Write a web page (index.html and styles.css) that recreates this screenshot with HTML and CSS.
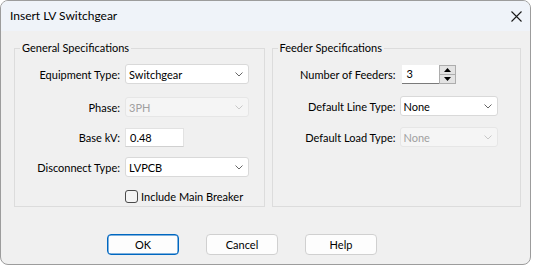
FILE: index.html
```html
<!DOCTYPE html>
<html>
<head>
<meta charset="utf-8">
<link rel="stylesheet" href="styles.css">
</head>
<body>
<div class="win">
  <div class="titlebar">
    <span class="title">Insert LV Switchgear</span>
    <svg class="close" width="11" height="11" viewBox="0 0 11 11"><path d="M0.5 0.5 L10.5 10.5 M10.5 0.5 L0.5 10.5" stroke="#1a1a1a" stroke-width="1.1" fill="none"/></svg>
  </div>
  <div class="content">
    <div class="groups">
      <fieldset class="group group-left">
        <legend>General Specifications</legend>
        <div class="row r1">
          <span class="lbl">Equipment Type:</span>
          <div class="combo"><span>Switchgear</span><svg class="chev" width="8" height="5" viewBox="0 0 8 5"><path d="M0.5 0.5 L4 4 L7.5 0.5" stroke="#666" fill="none"/></svg></div>
        </div>
        <div class="row r2">
          <span class="lbl">Phase:</span>
          <div class="combo disabled"><span>3PH</span><svg class="chev" width="8" height="5" viewBox="0 0 8 5"><path d="M0.5 0.5 L4 4 L7.5 0.5" stroke="#c8c8c8" fill="none"/></svg></div>
        </div>
        <div class="row r3">
          <span class="lbl">Base kV:</span>
          <div class="edit short">0.48</div>
        </div>
        <div class="row r4">
          <span class="lbl">Disconnect Type:</span>
          <div class="combo"><span>LVPCB</span><svg class="chev" width="8" height="5" viewBox="0 0 8 5"><path d="M0.5 0.5 L4 4 L7.5 0.5" stroke="#666" fill="none"/></svg></div>
        </div>
        <div class="row r5">
          <span class="lbl"></span>
          <label class="check"><span class="box"></span>Include Main Breaker</label>
        </div>
      </fieldset>
      <fieldset class="group group-right">
        <legend>Feeder Specifications</legend>
        <div class="row r1">
          <span class="lbl">Number of Feeders:</span>
          <div class="spin">
            <div class="spin-edit">3</div>
            <div class="spin-btns">
              <div class="sb"><svg width="7" height="4" viewBox="0 0 7 4"><path d="M0 4 L3.5 0 L7 4 Z" fill="#000"/></svg></div>
              <div class="sb"><svg width="7" height="4" viewBox="0 0 7 4"><path d="M0 0 L3.5 4 L7 0 Z" fill="#000"/></svg></div>
            </div>
          </div>
        </div>
        <div class="row r2b">
          <span class="lbl">Default Line Type:</span>
          <div class="combo"><span>None</span><svg class="chev" width="8" height="5" viewBox="0 0 8 5"><path d="M0.5 0.5 L4 4 L7.5 0.5" stroke="#666" fill="none"/></svg></div>
        </div>
        <div class="row r3b">
          <span class="lbl">Default Load Type:</span>
          <div class="combo disabled"><span>None</span><svg class="chev" width="8" height="5" viewBox="0 0 8 5"><path d="M0.5 0.5 L4 4 L7.5 0.5" stroke="#c8c8c8" fill="none"/></svg></div>
        </div>
      </fieldset>
    </div>
    <div class="buttons">
      <button class="btn default">OK</button>
      <button class="btn">Cancel</button>
      <button class="btn">Help</button>
    </div>
  </div>
</div>
</body>
</html>
```
FILE: styles.css
```css
* { box-sizing: border-box; }
html, body { margin: 0; padding: 0; background: #ffffff; }
body {
  font-family: "Lato", "Noto Sans", sans-serif;
  font-size: 11px;
  color: #000;
}
.win {
  width: 531px;
  height: 265px;
  border: 1px solid #9c9c9c;
  border-radius: 8px;
  overflow: hidden;
  background: #f0f0f0;
  display: flex;
  flex-direction: column;
}
.titlebar {
  height: 30px;
  flex: none;
  background: #eff3f9;
  display: flex;
  align-items: center;
  padding-left: 9px;
  padding-right: 8px;
}
.title { flex: 1; font-size: 12px; line-height: 16px; }
.content {
  flex: 1;
  padding: 9px 9px 0 13px;
}
.groups {
  display: flex;
  gap: 7px;
}
.group {
  margin: 0;
  padding: 0;
  border: 1px solid #dcdcdc;
  height: 167px;
  min-width: 0;
}
.group-left { width: 251px; }
.group-right { width: 250px; }
legend {
  padding: 0 2px;
  margin-left: 5px;
  line-height: 16px;
}
.row {
  display: flex;
  align-items: center;
  height: 20px;
}
.lbl {
  text-align: right;
  flex: none;
}
.group-left .lbl { width: 105px; margin-right: 5px; }
.group-right .lbl { width: 123px; margin-right: 4px; }
.group-left .r1 { margin-top: 8px; }
.group-left .r2 { margin-top: 13px; }
.group-left .r3 { margin-top: 10px; }
.group-left .r4 { margin-top: 10px; }
.group-left .r5 { margin-top: 9px; }
.group-right .r1 { margin-top: 8px; }
.group-right .r2b { margin-top: 12px; }
.group-right .r3b { margin-top: 11px; }
.combo {
  width: 124px;
  height: 20px;
  background: #fff;
  border: 1px solid #d9d9d9;
  border-radius: 3px;
  display: flex;
  align-items: center;
  padding-left: 3px;
  padding-right: 5px;
}
.group-right .combo { width: 98px; }
.combo span { flex: 1; }
.combo.disabled {
  background: #f5f5f5;
  border-color: #e6e6e6;
  color: #a0a0a0;
}
.edit {
  height: 19px;
  background: #fff;
  border: 1px solid #e2e2e2;
  border-bottom-color: #d0d0d0;
  display: flex;
  align-items: center;
  padding-left: 4px;
}
.edit.short { width: 59px; }
.check {
  display: flex;
  align-items: center;
  height: 13px;
}
.check .box {
  width: 13px;
  height: 13px;
  border: 1px solid #4a4a4a;
  border-radius: 3px;
  background: #f4f4f4;
  margin-right: 3px;
}
.spin {
  display: flex;
  height: 19px;
  margin-left: 2px;
}
.spin-edit {
  width: 37px;
  height: 19px;
  background: #fff;
  border-bottom: 1px solid #7a7a7a;
  padding-left: 5px;
  display: flex;
  align-items: center;
}
.spin-btns {
  width: 17px;
  height: 19px;
  border: 1px solid #adadad;
  background: #e3e3e3;
  display: flex;
  flex-direction: column;
}
.sb {
  flex: 1;
  display: flex;
  align-items: center;
  justify-content: center;
}
.sb + .sb { border-top: 1px solid #adadad; }
.buttons {
  display: flex;
  gap: 27px;
  padding-left: 93px;
  margin-top: 27px;
}
.btn {
  width: 72px;
  height: 21px;
  font-family: inherit;
  font-size: 11px;
  background: #fdfdfd;
  border: 1px solid #d0d0d0;
  border-radius: 4px;
  padding: 0;
  color: #000;
}
.btn.default {
  border: 1px solid #0067c0;
  box-shadow: inset 0 0 0 0.5px #0067c0;
}
```
